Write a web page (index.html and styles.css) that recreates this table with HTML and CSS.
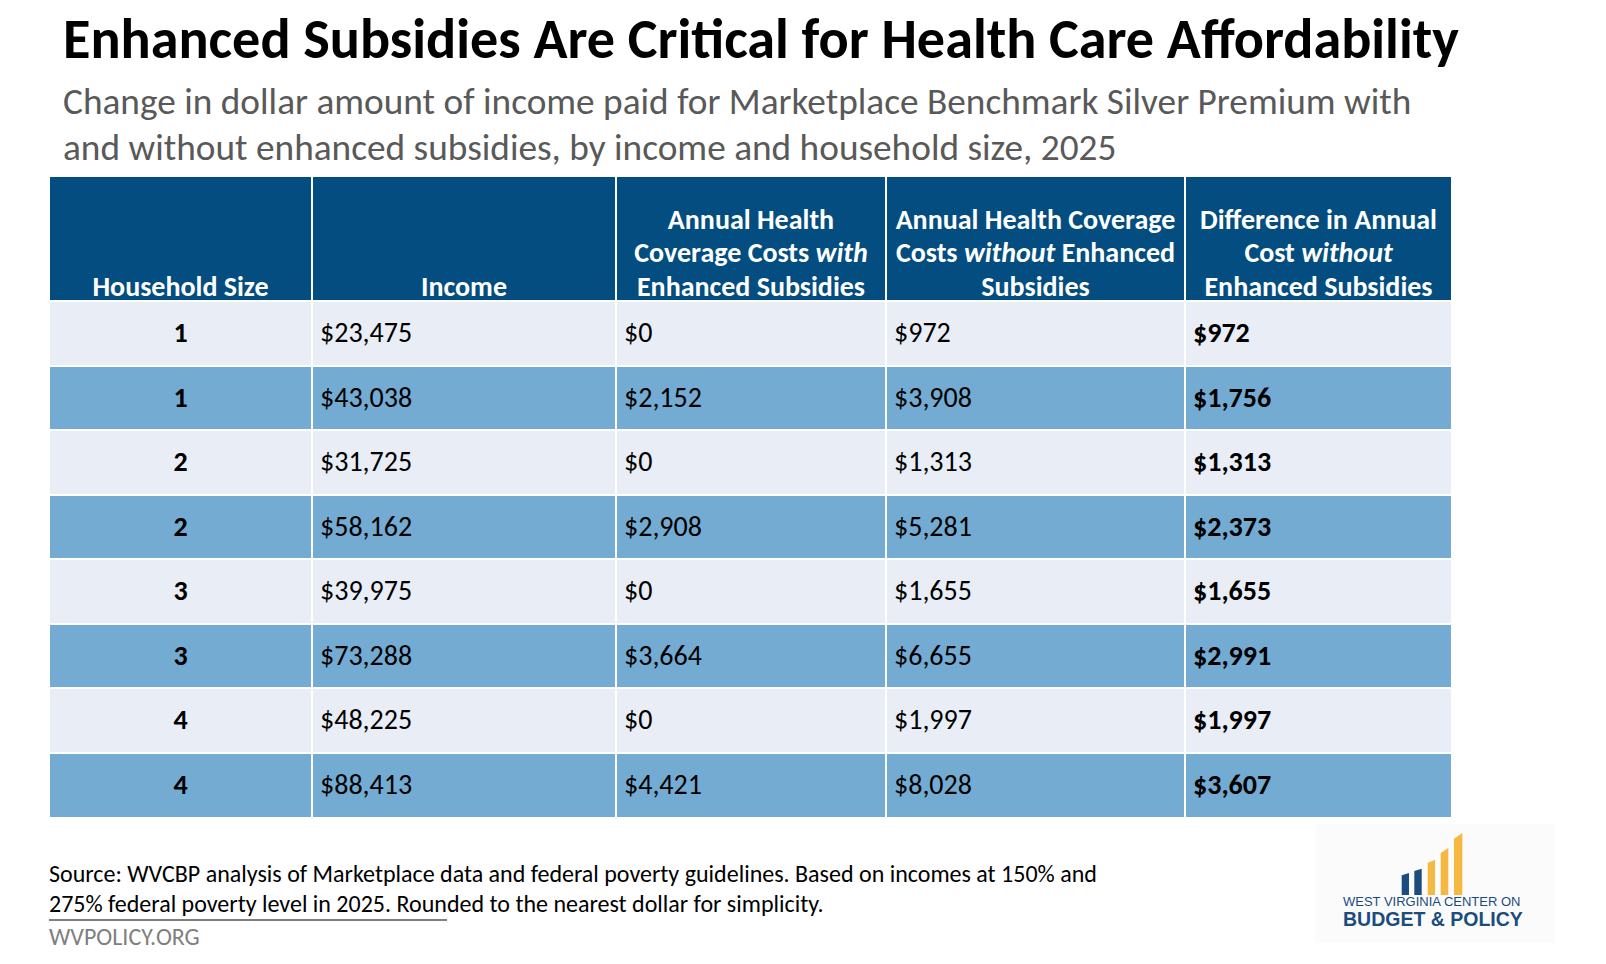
FILE: index.html
```html
<!DOCTYPE html>
<html lang="en">
<head>
<meta charset="utf-8">
<title>Enhanced Subsidies Are Critical for Health Care Affordability</title>
<link rel="stylesheet" href="styles.css">
</head>
<body>
<div class="page">
  <header class="heading">
    <h1 class="title">Enhanced Subsidies Are Critical for Health Care Affordability</h1>
    <p class="subtitle">Change in dollar amount of income paid for Marketplace Benchmark Silver Premium with and without enhanced subsidies, by income and household size, 2025</p>
  </header>

  <table class="data">
    <colgroup>
      <col class="c1"><col class="c2"><col class="c3"><col class="c4"><col class="c5">
    </colgroup>
    <thead>
      <tr>
        <th><span class="label">Household Size</span></th>
        <th><span class="label">Income</span></th>
        <th><span class="label">Annual Health Coverage Costs <em>with</em> Enhanced Subsidies</span></th>
        <th><span class="label">Annual Health Coverage Costs <em>without</em> Enhanced Subsidies</span></th>
        <th><span class="label">Difference in Annual Cost <em>without</em> Enhanced Subsidies</span></th>
      </tr>
    </thead>
    <tbody>
      <tr class="light"><td class="size">1</td><td>$23,475</td><td>$0</td><td>$972</td><td class="diff">$972</td></tr>
      <tr class="blue"><td class="size">1</td><td>$43,038</td><td>$2,152</td><td>$3,908</td><td class="diff">$1,756</td></tr>
      <tr class="light"><td class="size">2</td><td>$31,725</td><td>$0</td><td>$1,313</td><td class="diff">$1,313</td></tr>
      <tr class="blue"><td class="size">2</td><td>$58,162</td><td>$2,908</td><td>$5,281</td><td class="diff">$2,373</td></tr>
      <tr class="light"><td class="size">3</td><td>$39,975</td><td>$0</td><td>$1,655</td><td class="diff">$1,655</td></tr>
      <tr class="blue"><td class="size">3</td><td>$73,288</td><td>$3,664</td><td>$6,655</td><td class="diff">$2,991</td></tr>
      <tr class="light"><td class="size">4</td><td>$48,225</td><td>$0</td><td>$1,997</td><td class="diff">$1,997</td></tr>
      <tr class="blue"><td class="size">4</td><td>$88,413</td><td>$4,421</td><td>$8,028</td><td class="diff">$3,607</td></tr>
    </tbody>
  </table>

  <footer class="foot">
    <div class="source">
      <p class="note">Source: WVCBP analysis of Marketplace data and federal poverty guidelines. Based on incomes at 150% and 275% federal poverty level in 2025. Rounded to the nearest dollar for simplicity.</p>
      <div class="rule"></div>
      <p class="site">WVPOLICY.ORG</p>
    </div>
    <div class="logo">
      <svg class="bars" width="64" height="64" viewBox="0 0 64 64" aria-hidden="true">
        <polygon points="0.7,44.3 8,42 8,64 0.7,64" fill="#1b4c7e"/>
        <polygon points="13.3,40 20.7,37.7 20.7,64 13.3,64" fill="#1b4c7e"/>
        <polygon points="26.7,32 34,28.7 34,64 26.7,64" fill="#f5b841"/>
        <polygon points="39.7,22 47.3,17 47.3,64 39.7,64" fill="#f5b841"/>
        <polygon points="53,7.7 61.3,2 61.3,64 53,64" fill="#f5b841"/>
      </svg>
      <div class="org-top">WEST VIRGINIA CENTER ON</div>
      <div class="org-bottom">BUDGET &amp; POLICY</div>
    </div>
  </footer>
</div>
</body>
</html>
```

FILE: styles.css
```css
html, body {
  margin: 0;
  padding: 0;
  background: #ffffff;
}

body {
  font-family: Carlito, Calibri, "Open Sans", sans-serif;
  color: #000000;
}

.page {
  width: 1606px;
  height: 964px;
  overflow: hidden;
}

.heading {
  padding: 8px 0 0 63px;
}

.title {
  margin: 0;
  font-size: 56.2px;
  line-height: 62px;
  font-weight: 700;
  color: #000000;
}

.subtitle {
  margin: 8px 0 0 0;
  width: 1400px;
  font-size: 37.3px;
  line-height: 46px;
  color: #595959;
}

.data {
  margin: 7px 0 0 50px;
  width: 1401px;
  border-collapse: collapse;
  table-layout: fixed;
  font-size: 28px;
}

.c1 { width: 262px; }
.c2 { width: 304px; }
.c3 { width: 270px; }
.c4 { width: 299px; }
.c5 { width: 266px; }

.data th,
.data td {
  border: 2px solid #ffffff;
}

.data tr:first-child th { border-top: 0; }
.data th:first-child, .data td:first-child { border-left: 0; }
.data th:last-child, .data td:last-child { border-right: 0; }
.data tbody tr:last-child td { border-bottom: 0; }

.data th {
  background: #034d80;
  color: #ffffff;
  font-weight: 700;
  text-align: center;
  vertical-align: bottom;
  height: 124px;
  padding: 0 4px 0;
  line-height: 33.5px;
  box-sizing: border-box;
}

.data th .label {
  display: block;
  margin-bottom: -3px;
}

.data th em {
  font-style: italic;
}

.data tbody tr {
  height: 64.5px;
}

.data td {
  padding: 0 0 0 7px;
  vertical-align: middle;
  line-height: 30px;
}

.light td { background: #e9edf5; }
.blue td { background: #73abd2; }

.data td.size {
  text-align: center;
  font-weight: 700;
  padding: 0;
}

.data td.diff {
  font-weight: 700;
}

.foot {
  display: flex;
  justify-content: space-between;
  align-items: flex-start;
  padding: 0 51px 0 49px;
}

.source {
  padding-top: 42px;
  width: 1070px;
}

.note {
  margin: 0;
  font-size: 24px;
  line-height: 30px;
  color: #000000;
}

.rule {
  width: 398px;
  height: 2px;
  background: #7f7f7f;
  margin-top: 0;
}

.site {
  margin: 3px 0 0 0;
  font-size: 24px;
  line-height: 26px;
  color: #7f7f7f;
}

.logo {
  margin-top: 7px;
  width: 240px;
  height: 119px;
  background-color: #fbfbfb;
  display: flex;
  flex-direction: column;
  align-items: flex-start;
  box-sizing: border-box;
  padding: 7px 0 0 28px;
}

.bars {
  display: block;
  margin-left: 58px;
}

.org-top {
  margin-top: 0;
  font-family: "Liberation Sans", Arial, sans-serif;
  font-size: 13px;
  line-height: 11px;
  padding-top: 1px;
  color: #1b4c7e;
  white-space: nowrap;
}

.org-bottom {
  margin-top: 3px;
  font-family: "Liberation Sans", Arial, sans-serif;
  font-size: 19.5px;
  line-height: 18px;
  font-weight: 700;
  color: #1b4c7e;
  white-space: nowrap;
}
```
